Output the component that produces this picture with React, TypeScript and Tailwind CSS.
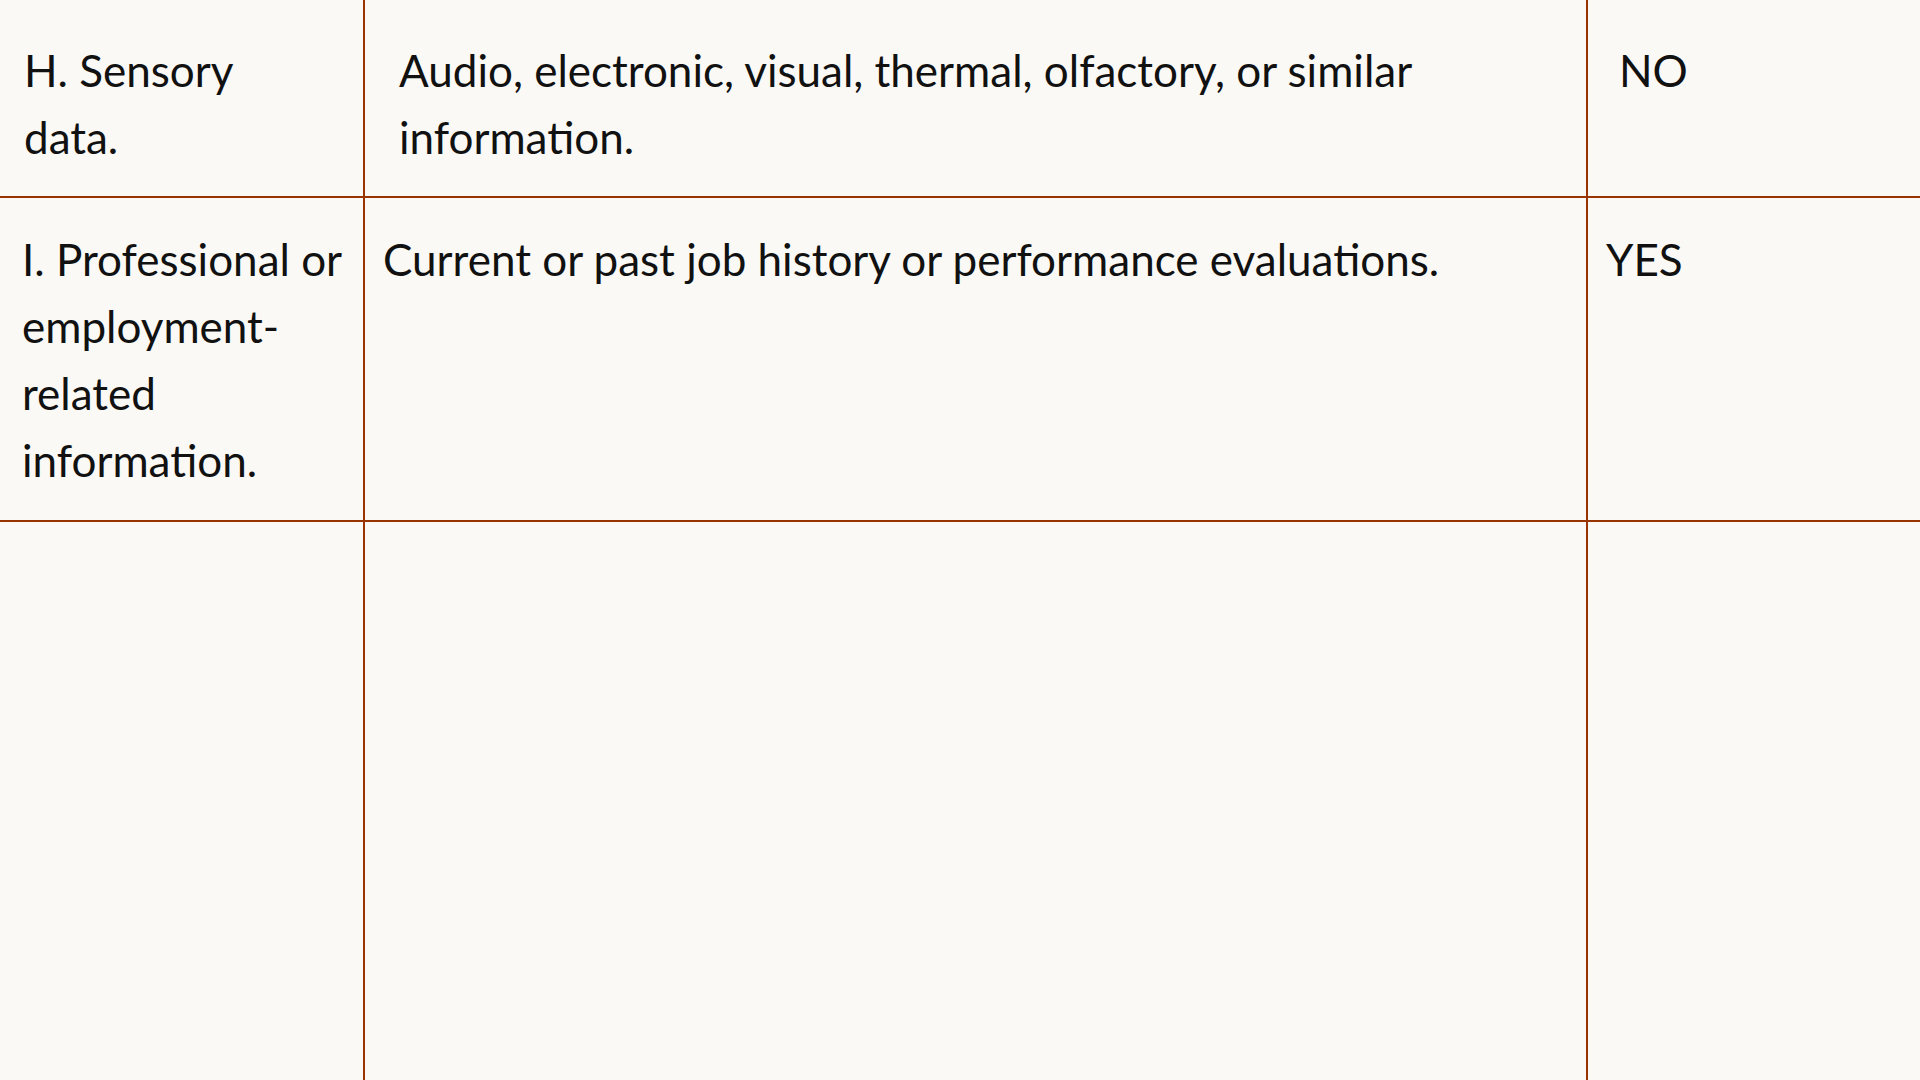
import React from 'react';

interface RowProps {
  category: React.ReactNode;
  description: React.ReactNode;
  collected: string;
  rowClass: string;
  pads: [string, string, string];
}

const Row: React.FC<RowProps> = ({ category, description, collected, rowClass, pads }) => {
  return (
    <div className={`flex border-b-2 border-[#993300] ${rowClass}`}>
      <div className={`w-[365px] shrink-0 border-r-2 border-[#993300] ${pads[0]}`}>{category}</div>
      <div className={`w-[1223px] shrink-0 border-r-2 border-[#993300] ${pads[1]}`}>{description}</div>
      <div className={`flex-1 ${pads[2]}`}>{collected}</div>
    </div>
  );
};

const App: React.FC = () => {
  return (
    <div
      className="min-h-screen w-full overflow-hidden bg-[#faf9f5] text-[44px] leading-[67px] text-[#111111]"
      style={{ fontFamily: 'Lato, "Open Sans", sans-serif' }}
    >
      <Row
        rowClass="h-[198px]"
        pads={['pl-[24px] pt-[37px]', 'pl-[34px] pt-[37px]', 'pl-[31px] pt-[37px]']}
        category={<>H. Sensory<br />data.</>}
        description={<>Audio, electronic, visual, thermal, olfactory, or similar<br />information.</>}
        collected="NO"
      />
      <Row
        rowClass="h-[324px]"
        pads={['pl-[22px] pt-[28px]', 'pl-[18px] pt-[28px]', 'pl-[18px] pt-[28px]']}
        category={<>I. Professional or<br />employment-<br />related<br />information.</>}
        description="Current or past job history or performance evaluations."
        collected="YES"
      />
      <div className="flex h-[560px]">
        <div className="w-[365px] shrink-0 border-r-2 border-[#993300]" />
        <div className="w-[1223px] shrink-0 border-r-2 border-[#993300]" />
        <div className="flex-1" />
      </div>
    </div>
  );
};

export default App;
